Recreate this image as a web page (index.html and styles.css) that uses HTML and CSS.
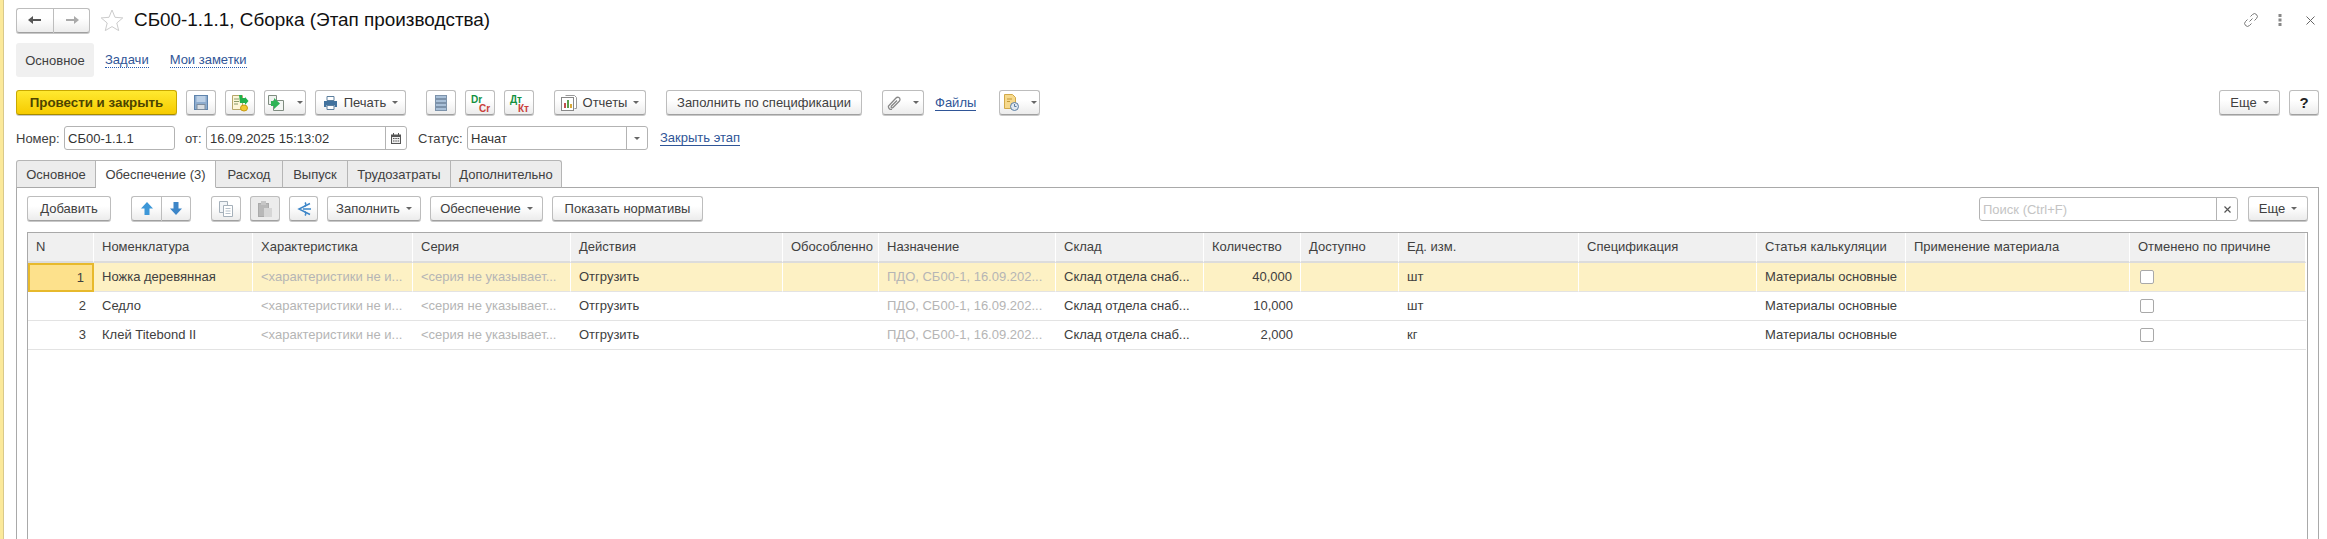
FILE: index.html
```html
<!DOCTYPE html>
<html lang="ru">

<head>
    <title>СБ00-1.1.1, Сборка (Этап производства)</title>
    <meta charset="utf-8">
    <link rel="stylesheet" href="styles.css">
</head>

<body>

    <div class="strip"></div>

    <main>

        <header class="head">
            <div class="nav-group">
                <button class="btn nav-btn">
                    <svg width="16" height="12" viewBox="0 0 16 12"><path d="M1 6l5-4v3h8v2H6v3z" fill="#555"/></svg>
                </button>
                <button class="btn nav-btn">
                    <svg width="16" height="12" viewBox="0 0 16 12"><path d="M15 6l-5-4v3H2v2h8v3z" fill="#aaa"/></svg>
                </button>
            </div>
            <svg class="star" width="24" height="24" viewBox="0 0 24 24"><path d="M12 2l3 7.300 7.800.6-6 5.100 1.900 7.600L12 18.600l-6.700 4 1.900-7.600-6-5.100 7.800-.6z" fill="#fff" stroke="#ccc"/></svg>
            <h1>СБ00-1.1.1, Сборка (Этап производства)</h1>
            <div class="head-icons">
                <svg width="16" height="16" viewBox="0 0 16 16" fill="none" stroke="#777"><path d="M6.500 9.500l3-3"/><path d="M7.500 4.500l2-2a2.800 2.800 0 0 1 4 4l-2 2"/><path d="M8.500 11.500l-2 2a2.800 2.800 0 0 1-4-4l2-2"/></svg>
                <svg width="4" height="12" viewBox="0 0 4 12" fill="#888"><rect x="0.500" y="0" width="3" height="3"/><rect x="0.500" y="4.500" width="3" height="3"/><rect x="0.500" y="9" width="3" height="3"/></svg>
                <svg class="close-icon" width="9" height="9" viewBox="0 0 9 9" stroke="#666"><path d="M.5.5l8 8M8.500.5l-8 8"/></svg>
            </div>
        </header>

        <nav class="view-tabs">
            <span class="view-tab">Основное</span>
            <a class="dotted">Задачи</a>
            <a class="dotted">Мои заметки</a>
        </nav>

        <div class="toolbar main-bar">
            <button class="btn btn-primary">Провести и закрыть</button>
            <button class="btn w30">
                <svg width="14" height="15" viewBox="0 0 14 15"><rect x=".5" y=".5" width="13" height="14" fill="#8eacce" stroke="#5f84ad"/><rect x="2.500" y="1" width="9" height="6" fill="#bcd0e6"/><rect x="3" y="9.500" width="8" height="5" fill="#d8dde2" stroke="#7f8d9c"/></svg>
            </button>
            <button class="btn w30">
                <svg width="18" height="18" viewBox="0 0 18 18"><path d="M1.500 1.500h10v14h-10z" fill="#fdf6d8" stroke="#b5a66a"/><path d="M3 5h5M3 7.500h5M3 10h4" stroke="#8a9a6a"/><path d="M8 1h3v3h3v-1l3.500 4-3.500 4v-2H9z" fill="#22b14c"/><ellipse cx="13" cy="14" rx="3.500" ry="3" fill="#f2c832" stroke="#c79a10"/></svg>
            </button>
            <button class="btn w42 has-caret">
                <svg width="18" height="18" viewBox="0 0 18 18"><path d="M1.500 1.500h8v9h-8z" fill="#eef2ee" stroke="#7f8c80"/><path d="M6.500 6.500h10v10h-10z" fill="#f4f7f4" stroke="#7f8c80"/><path d="M4 7h3V4l6 5.500-6 5.500v-3H4z" fill="#2fb457"/></svg>
                <i class="caret"></i>
            </button>
            <button class="btn w91 has-caret">
                <svg width="15" height="14" viewBox="0 0 15 14"><path d="M4 .5h7v4H4z" fill="#fff" stroke="#5c7f9e"/><path d="M1 5h13v6h-2.500V9h-8v2H1z" fill="#41729e"/><path d="M4 9.500h7v4H4z" fill="#fff" stroke="#5c7f9e"/></svg>
                Печать<i class="caret"></i>
            </button>
            <button class="btn w30 gap-left">
                <svg width="12" height="16" viewBox="0 0 12 16"><g fill="#a9c0d8" stroke="#7d93ab"><rect x=".5" y=".5" width="11" height="3"/><rect x=".5" y="4.500" width="11" height="3"/><rect x=".5" y="8.500" width="11" height="3"/><rect x=".5" y="12.500" width="11" height="3"/></g></svg>
            </button>
            <button class="btn w30 acct"><span class="acct-debit">Dr</span><span class="acct-credit">Cr</span></button>
            <button class="btn w30 acct"><span class="acct-debit">Дт</span><span class="acct-credit">Кт</span></button>
            <button class="btn w92 gap-left has-caret">
                <svg width="16" height="16" viewBox="0 0 16 16"><path d="M4.500.5h9l2 2v11h-2" fill="#fff" stroke="#999"/><rect x=".5" y="2.500" width="12" height="13" fill="#fff" stroke="#888"/><rect x="3" y="8" width="2" height="5" fill="#c0504d"/><rect x="6" y="5" width="2" height="8" fill="#5a9e4b"/><rect x="9" y="9" width="2" height="4" fill="#d9a93a"/></svg>
                Отчеты<i class="caret"></i>
            </button>
            <button class="btn w196 gap-left">Заполнить по спецификации</button>
            <button class="btn w42 gap-left has-caret">
                <svg width="14" height="14" viewBox="0 0 14 14" fill="none" stroke="#888" stroke-width="1.300"><path d="M5 13.500c-2 .5-4-1.500-3.500-3.500L9 2c1.500-1.500 4-.5 4 1.500 0 1-.5 1.500-1 2L6 11.500c-1 1-2.500 0-1.500-1.500L10 4.500"/></svg>
                <i class="caret"></i>
            </button>
            <a class="link files-link">Файлы</a>
            <button class="btn w41 has-caret">
                <svg width="16" height="17" viewBox="0 0 16 17"><path d="M1.500.5h8l3 3v11h-11z" fill="#f6d98c" stroke="#d1a94a"/><path d="M4 5h5M4 7.500h3" stroke="#c49a3a"/><circle cx="11.500" cy="12.500" r="4" fill="#dfe7ef" stroke="#5b7ea3"/><path d="M11.500 10v2.500h2" fill="none" stroke="#5b7ea3"/></svg>
                <i class="caret"></i>
            </button>
            <div class="bar-right">
                <button class="btn w61 has-caret">Еще<i class="caret"></i></button>
                <button class="btn w30 help">?</button>
            </div>
        </div>

        <div class="fields">
            <label class="number-label">Номер:</label>
            <div class="input number-input">СБ00-1.1.1</div>
            <label class="from-label">от:</label>
            <div class="input date-input">
                <span class="input-text">16.09.2025 15:13:02</span>
                <span class="input-btn">
                    <svg width="10" height="11" viewBox="0 0 10 11"><path d="M0 1.500h10V11H0z" fill="#555"/><path d="M2 0h1v2H2zM7 0h1v2H7z" fill="#555"/><path d="M1 4h8v6H1z" fill="#eee"/><path d="M2 5h1.500v1H2zM4.300 5h1.500v1H4.300zM6.600 5h1.500v1H6.600zM2 7.500h1.500v1H2zM4.300 7.500h1.500v1H4.300zM6.600 7.500h1.500v1H6.600z" fill="#555"/></svg>
                </span>
            </div>
            <label class="status-label">Статус:</label>
            <div class="input status-input">
                <span class="input-text">Начат</span>
                <span class="input-btn"><i class="caret"></i></span>
            </div>
            <a class="link close-link">Закрыть этап</a>
        </div>

        <div class="tabs">
            <span class="tab w80">Основное</span>
            <span class="tab active w120">Обеспечение (3)</span>
            <span class="tab w67">Расход</span>
            <span class="tab w65">Выпуск</span>
            <span class="tab w103">Трудозатраты</span>
            <span class="tab w111">Дополнительно</span>
        </div>

        <section class="panel">
            <div class="toolbar">
                <button class="btn w84">Добавить</button>
                <div class="btn-group gap-left">
                    <button class="btn w30">
                        <svg width="12" height="13" viewBox="0 0 12 13"><path d="M6 0l6 6.500H8.500V13h-5V6.500H0z" fill="#3d97d8"/></svg>
                    </button>
                    <button class="btn w30">
                        <svg width="12" height="13" viewBox="0 0 12 13"><path d="M6 13L0 6.500h3.500V0h5v6.500H12z" fill="#3d86c8"/></svg>
                    </button>
                </div>
                <button class="btn w30 gap-left">
                    <svg width="14" height="16" viewBox="0 0 14 16"><path d="M.5.5h8v11h-8z" fill="#f2f5f8" stroke="#a5b0ba"/><path d="M4.500 4.500h9v11h-9z" fill="#fff" stroke="#a5b0ba"/><path d="M6.500 7.500h5M6.500 10h5M6.500 12.500h5" stroke="#b5c0ca"/></svg>
                </button>
                <button class="btn w30 is-disabled">
                    <svg width="14" height="16" viewBox="0 0 14 16"><rect x=".5" y="2.500" width="10" height="13" fill="#b8b8b8" stroke="#aaa"/><rect x="3" y="0" width="5" height="4" fill="#c6c6c6"/><rect x="6" y="7" width="8" height="9" fill="#d6d6d6"/></svg>
                </button>
                <button class="btn w29">
                    <svg width="16" height="14" viewBox="0 0 16 14" fill="none" stroke="#3d86c8" stroke-width="1.500"><path d="M14 1.500L3 7l11 5.500"/><path d="M7 7h8M10 2l-1-1.500M10 2l-1 2.500M10 12l-1 1.500M10 12l-1-2.500"/></svg>
                </button>
                <button class="btn w94 has-caret">Заполнить<i class="caret"></i></button>
                <button class="btn w113 has-caret">Обеспечение<i class="caret"></i></button>
                <button class="btn w151">Показать нормативы</button>
                <div class="bar-right">
                    <div class="input search-input">
                        <span class="input-text placeholder">Поиск (Ctrl+F)</span>
                        <span class="input-btn">
                            <svg width="7" height="7" viewBox="0 0 7 7" stroke="#555" stroke-width="1.200"><path d="M.5.500l6 6M6.500.500l-6 6"/></svg>
                        </span>
                    </div>
                    <button class="btn w60 has-caret">Еще<i class="caret"></i></button>
                </div>
            </div>

            <div class="grid-wrap">
                <table class="grid">
                    <colgroup>
                        <col class="c66"><col class="c159"><col class="c160"><col class="c158"><col class="c212">
                        <col class="c96"><col class="c177"><col class="c148"><col class="c97"><col class="c98">
                        <col class="c180"><col class="c178"><col class="c149"><col class="c224"><col class="c176">
                    </colgroup>
                    <thead>
                        <tr>
                            <th>N</th>
                            <th>Номенклатура</th>
                            <th>Характеристика</th>
                            <th>Серия</th>
                            <th>Действия</th>
                            <th>Обособленно</th>
                            <th>Назначение</th>
                            <th>Склад</th>
                            <th>Количество</th>
                            <th>Доступно</th>
                            <th>Ед. изм.</th>
                            <th>Спецификация</th>
                            <th>Статья калькуляции</th>
                            <th>Применение материала</th>
                            <th>Отменено по причине</th>
                        </tr>
                    </thead>
                    <tbody>
                        <tr class="selected">
                            <td class="num current">1</td>
                            <td>Ножка деревянная</td>
                            <td class="muted">&lt;характеристики не и...</td>
                            <td class="muted">&lt;серия не указывает...</td>
                            <td>Отгрузить</td>
                            <td></td>
                            <td class="muted">ПДО, СБ00-1, 16.09.202...</td>
                            <td>Склад отдела снаб...</td>
                            <td class="num">40,000</td>
                            <td></td>
                            <td>шт</td>
                            <td></td>
                            <td>Материалы основные</td>
                            <td></td>
                            <td><span class="check"></span></td>
                        </tr>
                        <tr>
                            <td class="num">2</td>
                            <td>Седло</td>
                            <td class="muted">&lt;характеристики не и...</td>
                            <td class="muted">&lt;серия не указывает...</td>
                            <td>Отгрузить</td>
                            <td></td>
                            <td class="muted">ПДО, СБ00-1, 16.09.202...</td>
                            <td>Склад отдела снаб...</td>
                            <td class="num">10,000</td>
                            <td></td>
                            <td>шт</td>
                            <td></td>
                            <td>Материалы основные</td>
                            <td></td>
                            <td><span class="check"></span></td>
                        </tr>
                        <tr>
                            <td class="num">3</td>
                            <td>Клей Titebond II</td>
                            <td class="muted">&lt;характеристики не и...</td>
                            <td class="muted">&lt;серия не указывает...</td>
                            <td>Отгрузить</td>
                            <td></td>
                            <td class="muted">ПДО, СБ00-1, 16.09.202...</td>
                            <td>Склад отдела снаб...</td>
                            <td class="num">2,000</td>
                            <td></td>
                            <td>кг</td>
                            <td></td>
                            <td>Материалы основные</td>
                            <td></td>
                            <td><span class="check"></span></td>
                        </tr>
                    </tbody>
                </table>
            </div>
        </section>

    </main>

</body>

</html>
```

FILE: styles.css
```css
* {
    box-sizing: border-box;
}

html,
body {
    height: 100%;
}

body {
    background-color: white;
    color: #404040;
    display: flex;
    font-family: "Liberation Sans", Arial, sans-serif;
    font-size: 13px;
    margin: 0;
    overflow: hidden;
}

.strip {
    background-color: #fbe99b;
    border-right: 1px solid #d9c98a;
    flex: none;
    width: 4px;
}

main {
    display: flex;
    flex: 1;
    flex-direction: column;
    min-width: 0;
    padding: 8px 8px 0 12px;
}

/* title row */
.head {
    align-items: center;
    display: flex;
    flex: none;
    height: 24px;
}

.nav-group {
    display: flex;
}

.nav-btn {
    width: 37px;
}

.nav-btn:first-child {
    border-radius: 3px 0 0 3px;
    border-right: 0;
}

.nav-btn:last-child {
    border-radius: 0 3px 3px 0;
}

.star {
    margin: 0 10px;
}

h1 {
    color: #111;
    font-size: 18.9px;
    font-weight: normal;
    margin: 0;
}

.head-icons {
    align-items: center;
    display: flex;
    gap: 19px;
    margin-left: auto;
    padding-right: 4px;
}

.close-icon {
    margin-left: 5px;
}

/* view tabs */
.view-tabs {
    align-items: center;
    display: flex;
    flex: none;
    height: 34px;
    margin-top: 11px;
}

.view-tab {
    align-items: center;
    background-color: #f0f0f0;
    border-radius: 3px;
    display: flex;
    height: 100%;
    justify-content: center;
    margin-right: 11px;
    width: 78px;
}

.dotted {
    border-bottom: 1px dotted #2a5db0;
    color: #2f5597;
    margin-right: 21px;
}

.link {
    border-bottom: 1px solid #2f5597;
    color: #2f5597;
}

/* buttons */
.toolbar {
    align-items: flex-start;
    display: flex;
    flex: none;
    gap: 9px;
    height: 26px;
}

.main-bar {
    margin-top: 13px;
}

.main-bar .link {
    align-self: center;
}

.btn {
    align-items: center;
    background: linear-gradient(#fff 40%, #ececec);
    border: 1px solid #bdbdbd;
    border-bottom-color: #a0a0a0;
    border-radius: 3px;
    box-shadow: 0 1px 0 #c8c8c8;
    color: #404040;
    display: inline-flex;
    flex: none;
    font-family: inherit;
    font-size: 13px;
    height: 25px;
    justify-content: center;
    padding: 0;
}

.btn-primary {
    background: linear-gradient(#ffe930, #f6cb00);
    border-color: #c9a900;
    border-bottom-color: #a58b00;
    color: #4d4400;
    font-size: 13.33px;
    font-weight: bold;
    width: 161px;
}

.has-caret svg {
    margin-right: 6px;
}

.caret {
    border-left: 3.5px solid transparent;
    border-right: 3.5px solid transparent;
    border-top: 3.5px solid #666;
    display: inline-block;
    height: 0;
    margin-left: 6px;
    width: 0;
}

.gap-left {
    margin-left: 11px;
}

.w29 { width: 29px; }
.w30 { width: 30px; }
.w41 { width: 41px; }
.w42 { width: 42px; }
.w60 { width: 60px; }
.w61 { width: 61px; }
.w84 { width: 84px; }
.w91 { width: 91px; }
.w92 { width: 92px; }
.w94 { width: 94px; }
.w113 { width: 113px; }
.w151 { width: 151px; }
.w196 { width: 196px; }

.acct {
    display: inline-block;
    font-size: 10px;
    font-weight: bold;
    line-height: 9px;
    padding: 3px 0 0 5px;
    text-align: left;
}

.acct-debit {
    color: #12913f;
    display: block;
}

.acct-credit {
    color: #c9403a;
    display: block;
    padding-left: 8px;
}

.files-link {
    margin: 0 14px 0 2px;
}

.help {
    color: #222;
    font-size: 15px;
    font-weight: bold;
}

.bar-right {
    align-items: flex-start;
    display: flex;
    gap: 9px;
    margin-left: auto;
}

.btn-group {
    display: flex;
}

.btn-group .btn:first-child {
    border-radius: 3px 0 0 3px;
    border-right: 0;
}

.btn-group .btn:last-child {
    border-radius: 0 3px 3px 0;
}

.is-disabled {
    background: #ececec;
}

/* header fields */
.fields {
    align-items: center;
    display: flex;
    flex: none;
    height: 24px;
    margin-top: 10px;
}

.fields label {
    flex: none;
}

.input {
    align-items: center;
    background-color: white;
    border: 1px solid #b3b3b3;
    border-radius: 3px;
    color: #333;
    display: flex;
    flex: none;
    height: 24px;
}

.input-text {
    flex: 1;
    padding-left: 3px;
}

.input-btn {
    align-items: center;
    align-self: stretch;
    border-left: 1px solid #b3b3b3;
    display: flex;
    flex: none;
    justify-content: center;
    width: 21px;
}

.input-btn .caret {
    margin: 0;
}

.number-label {
    width: 48px;
}

.number-input {
    padding-left: 3px;
    width: 111px;
}

.from-label {
    margin-left: 10px;
    width: 21px;
}

.date-input {
    width: 201px;
}

.status-label {
    margin-left: 11px;
    width: 49px;
}

.status-input {
    width: 181px;
}

.close-link {
    margin-left: 12px;
}

.placeholder {
    color: #c4c4c4;
}

/* tabs */
.tabs {
    display: flex;
    flex: none;
    height: 27px;
    margin-top: 10px;
    position: relative;
    z-index: 1;
}

.tab {
    align-items: center;
    background-color: #ececec;
    border: 1px solid #b5b5b5;
    border-left: 0;
    border-bottom: 1px solid #a9a9a9;
    display: flex;
    height: 28px;
    justify-content: center;
}

.tab:first-child {
    border-left: 1px solid #b5b5b5;
    border-radius: 3px 0 0 0;
}

.tab:last-child {
    border-radius: 0 3px 0 0;
}

.tab.active {
    background-color: white;
    border-bottom-color: white;
}

.w80 { width: 80px; }
.w120 { width: 120px; }
.w67 { width: 67px; }
.w65 { width: 65px; }
.w103 { width: 103px; }
.w111 { width: 111px; }

.panel {
    border: 1px solid #a9a9a9;
    border-bottom: 0;
    display: flex;
    flex: 1;
    flex-direction: column;
    min-height: 0;
    padding: 8px 10px 0 10px;
}

.search-input {
    margin-top: 1px;
    width: 259px;
}

.panel .bar-right {
    gap: 10px;
}

/* table */
.grid-wrap {
    border: 1px solid #a9a9a9;
    border-bottom: 0;
    flex: 1;
    margin-top: 10px;
    overflow: hidden;
}

.grid {
    border-collapse: separate;
    border-spacing: 0;
    table-layout: fixed;
    width: 2278px;
}

.c66 { width: 66px; }
.c96 { width: 96px; }
.c97 { width: 97px; }
.c98 { width: 98px; }
.c148 { width: 148px; }
.c149 { width: 149px; }
.c158 { width: 158px; }
.c159 { width: 159px; }
.c160 { width: 160px; }
.c176 { width: 176px; }
.c177 { width: 177px; }
.c178 { width: 178px; }
.c180 { width: 180px; }
.c212 { width: 212px; }
.c224 { width: 224px; }

th {
    background-color: #f0f0f0;
    border-bottom: 2px solid #dcdcdc;
    border-right: 1px solid white;
    font-weight: normal;
    height: 30px;
    overflow: hidden;
    padding: 0 8px 2px;
    text-align: left;
    white-space: nowrap;
}

td {
    border-bottom: 1px solid #e3e3e3;
    height: 29px;
    overflow: hidden;
    padding: 0 8px 1px;
    white-space: nowrap;
}

.num {
    text-align: right;
}

.muted {
    color: #b5b5b5;
}

.selected td {
    background-color: #fdf1c4;
    border-right: 1px solid white;
}

.selected td.current {
    background-color: #fde18c;
    border: 2px solid #e7b92c;
}

.check {
    background-color: white;
    border: 1px solid #a9a9a9;
    border-radius: 2px;
    display: block;
    height: 14px;
    margin-left: 2px;
    width: 14px;
}
```
